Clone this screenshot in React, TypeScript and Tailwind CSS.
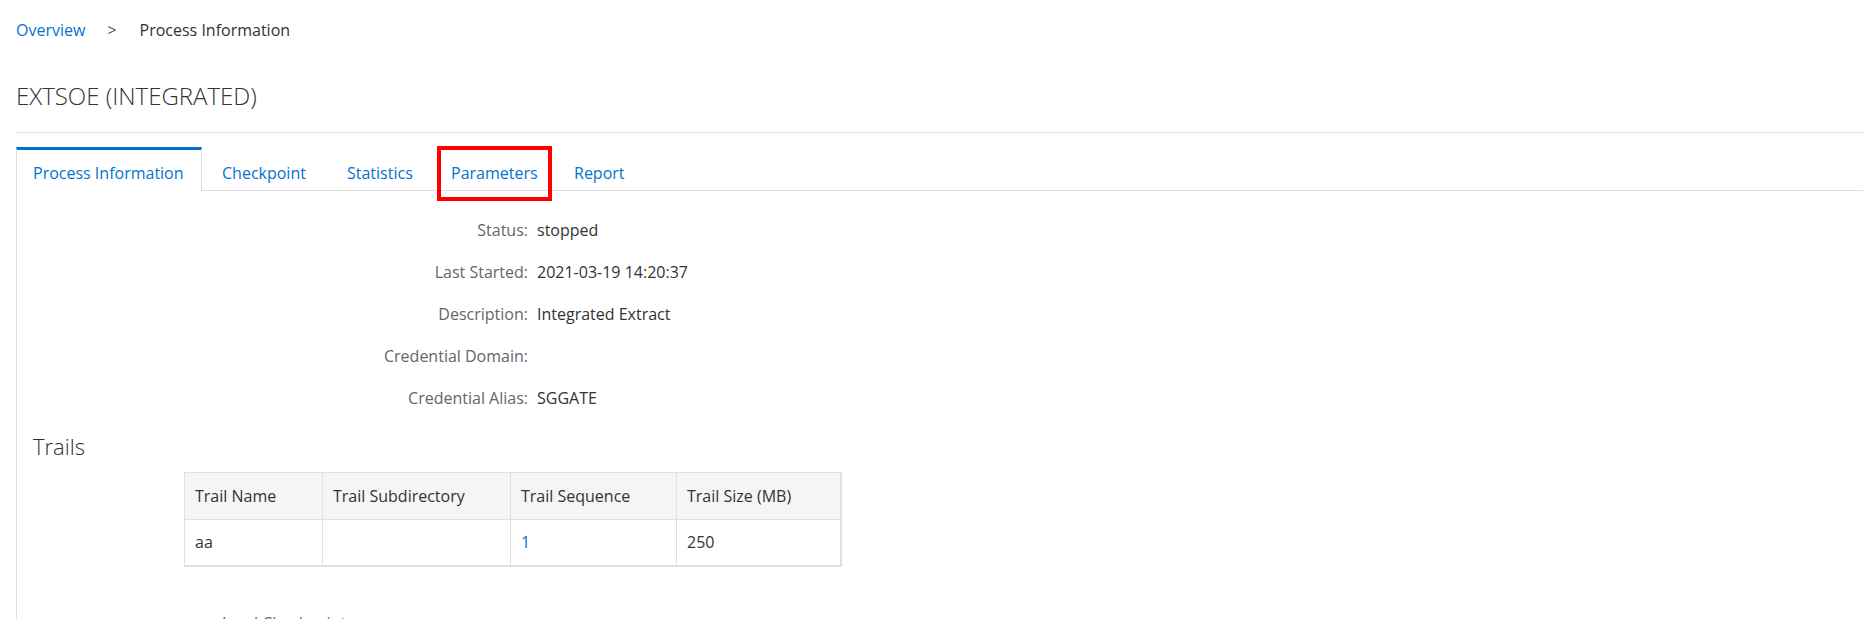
import React from "react";

const details = [
  { label: "Status:", value: "stopped" },
  { label: "Last Started:", value: "2021-03-19 14:20:37" },
  { label: "Description:", value: "Integrated Extract" },
  { label: "Credential Domain:", value: "" },
  { label: "Credential Alias:", value: "SGGATE" },
];

const App: React.FC = () => {
  return (
    <div
      className="h-[619px] w-full overflow-hidden bg-white text-[16px] text-[#333]"
      style={{ fontFamily: '"Open Sans", "Noto Sans", Arial, sans-serif' }}
    >
      {/* breadcrumb */}
      <div className="flex items-center pl-4 pt-[19px] leading-[22px]">
        <span className="text-[#0572ce]">Overview</span>
        <span className="ml-[22px] text-[#555]">&gt;</span>
        <span className="ml-[23px]">Process Information</span>
      </div>

      {/* title */}
      <div className="ml-4 mt-[39px] border-b border-[#e0e0e0] pb-[20px]">
        <h1 className="text-[24px] font-light leading-[32px] text-[#333]">
          EXTSOE (INTEGRATED)
        </h1>
      </div>

      {/* tabs */}
      <div className="ml-4 mt-[14px] flex">
        <div className="w-[186px] border-x border-t-[3px] border-x-[#ddd] border-t-[#0572ce] pl-[16px] pt-[12px] pb-[7px] leading-[22px] text-[#0572ce]">
          Process Information
        </div>
        <div className="flex flex-1 border-b border-[#ddd] pt-[3px] leading-[22px] text-[#0572ce]">
          <div className="w-[125px] pl-[20px] pt-[12px]">Checkpoint</div>
          <div className="w-[110px] pl-[20px] pt-[12px]">Statistics</div>
          <div className="relative w-[117px] pl-[14px] pt-[12px]">
            Parameters
            <div className="absolute left-0 top-[-4px] h-[55px] w-[115px] border-4 border-[#f00]" />
          </div>
          <div className="pl-[20px] pt-[12px]">Report</div>
        </div>
      </div>

      {/* panel */}
      <div className="ml-4 border-l border-[#ddd] pt-[18px]">
        <div className="grid grid-cols-[511px_1fr] gap-x-[9px]">
          {details.map((d) => (
            <React.Fragment key={d.label}>
              <div className="flex h-[42px] items-center justify-end text-[#666]">
                {d.label}
              </div>
              <div className="flex h-[42px] items-center">{d.value}</div>
            </React.Fragment>
          ))}
        </div>

        <h2 className="mt-[11px] pl-4 text-[22px] font-light leading-[32px] text-[#3b2a2a]">
          Trails
        </h2>

        <div className="mt-[10px] pl-[167px]">
          <table className="border-collapse border-r-2 border-b-2 border-[#e0e0e0] text-left">
            <thead>
              <tr className="bg-[#f5f5f5]">
                <th className="h-[47px] w-[138px] border border-[#e0e0e0] pl-[10px] font-normal">Trail Name</th>
                <th className="w-[188px] border border-[#e0e0e0] pl-[10px] font-normal">Trail Subdirectory</th>
                <th className="w-[166px] border border-[#e0e0e0] pl-[10px] font-normal">Trail Sequence</th>
                <th className="w-[164px] border border-[#e0e0e0] pl-[10px] font-normal">Trail Size (MB)</th>
              </tr>
            </thead>
            <tbody>
              <tr>
                <td className="h-[46px] border border-[#e0e0e0] pl-[10px]">aa</td>
                <td className="border border-[#e0e0e0] pl-[10px]"></td>
                <td className="border border-[#e0e0e0] pl-[10px] text-[#0572ce]">1</td>
                <td className="border border-[#e0e0e0] pl-[10px]">250</td>
              </tr>
            </tbody>
          </table>
        </div>

        <div className="mt-[45px] pl-[205px] leading-[22px] text-[#666]">
          Lead Checkpoint
        </div>
      </div>
    </div>
  );
};

export default App;
